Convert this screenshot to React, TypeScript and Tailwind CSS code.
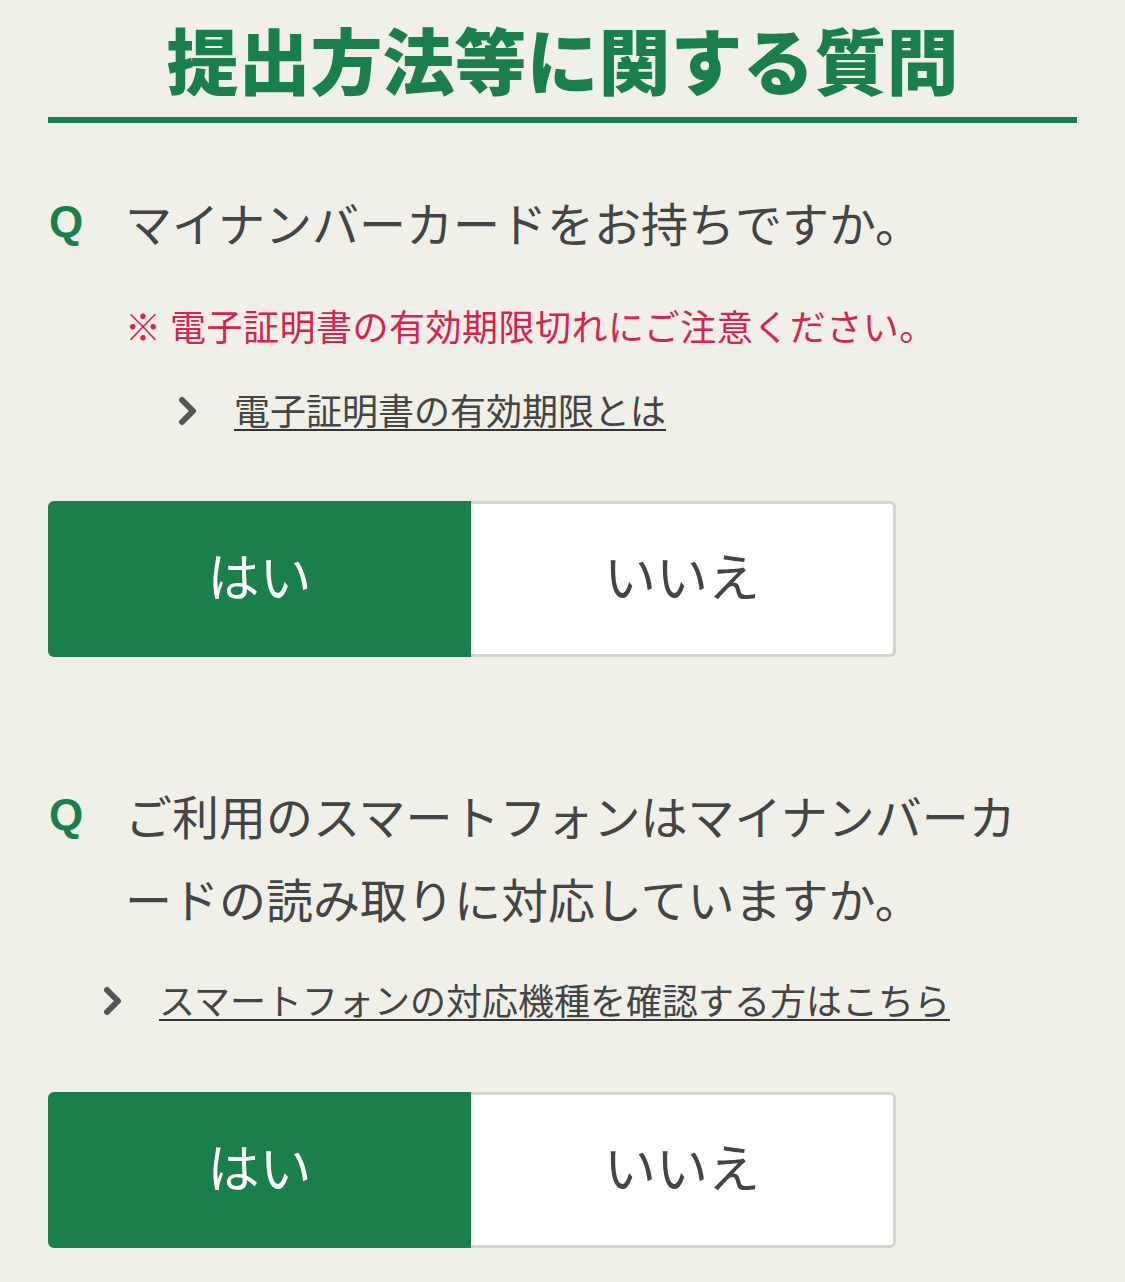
import React from 'react'

const jp = "font-['Noto_Sans_CJK_JP','Noto_Sans_CJK_SC',sans-serif]"

function Chevron() {
  return (
    <svg width="20" height="30" viewBox="0 0 20 30" className="shrink-0">
      <polyline points="4,4 15,15 4,26" fill="none" stroke="#555" strokeWidth="6" strokeLinecap="round" strokeLinejoin="round" />
    </svg>
  )
}

function Question({ children }: { children: React.ReactNode }) {
  return (
    <div className="flex items-start">
      <span className="w-[77px] shrink-0 pl-[1px] font-['Liberation_Sans',Arial,sans-serif] text-[44px] font-bold leading-[83px] text-[#1b7f4b]">
        Q
      </span>
      <p className="max-w-[920px] text-[47px] leading-[83px] text-[#444]">{children}</p>
    </div>
  )
}

function LinkRow({ indent, children }: { indent: string; children: React.ReactNode }) {
  return (
    <div className={`flex items-center gap-[36px] ${indent}`}>
      <Chevron />
      <a href="#" className="pb-[4px] text-[36px] leading-[50px] text-[#444] underline decoration-[2px] underline-offset-[4px] decoration-[#333]">
        {children}
      </a>
    </div>
  )
}

function YesNo() {
  return (
    <div className="flex h-[156px] w-[848px]">
      <button className="flex w-[423px] items-center justify-center rounded-l-[6px] bg-[#1b7f4b] pb-[8px] text-[52px] text-white">
        はい
      </button>
      <button className="flex flex-1 items-center justify-center rounded-r-[6px] border-[3px] border-l-0 border-[#d6d3c9] bg-white pb-[8px] text-[52px] text-[#444]">
        いいえ
      </button>
    </div>
  )
}

export default function App() {
  return (
    <div className={`min-h-[1282px] bg-[#f0efe8] px-[48px] pt-[15px] ${jp}`}>
      {/* Header */}
      <h1 className="text-center text-[72px] font-black leading-[86px] text-[#1b7f4b]">
        提出方法等に関する質問
      </h1>
      <div className="mt-[16px] h-[6px] bg-[#1b7f4b]" />

      {/* Q1 */}
      <div className="mt-[57px]">
        <Question>マイナンバーカードをお持ちですか。</Question>
        <p className="mt-[37px] pl-[77px] text-[36px] leading-[50px] tracking-[0.5px] text-[#d42450]">
          ※ 電子証明書の有効期限切れにご注意ください。
        </p>
        <div className="mt-[34px]">
          <LinkRow indent="pl-[130px]">電子証明書の有効期限とは</LinkRow>
        </div>
        <div className="mt-[63px]">
          <YesNo />
        </div>
      </div>

      {/* Q2 */}
      <div className="mt-[116px]">
        <Question>ご利用のスマートフォンはマイナンバーカードの読み取りに対応していますか。</Question>
        <div className="mt-[35px]">
          <LinkRow indent="pl-[55px]">スマートフォンの対応機種を確認する方はこちら</LinkRow>
        </div>
        <div className="mt-[64px]">
          <YesNo />
        </div>
      </div>
    </div>
  )
}
